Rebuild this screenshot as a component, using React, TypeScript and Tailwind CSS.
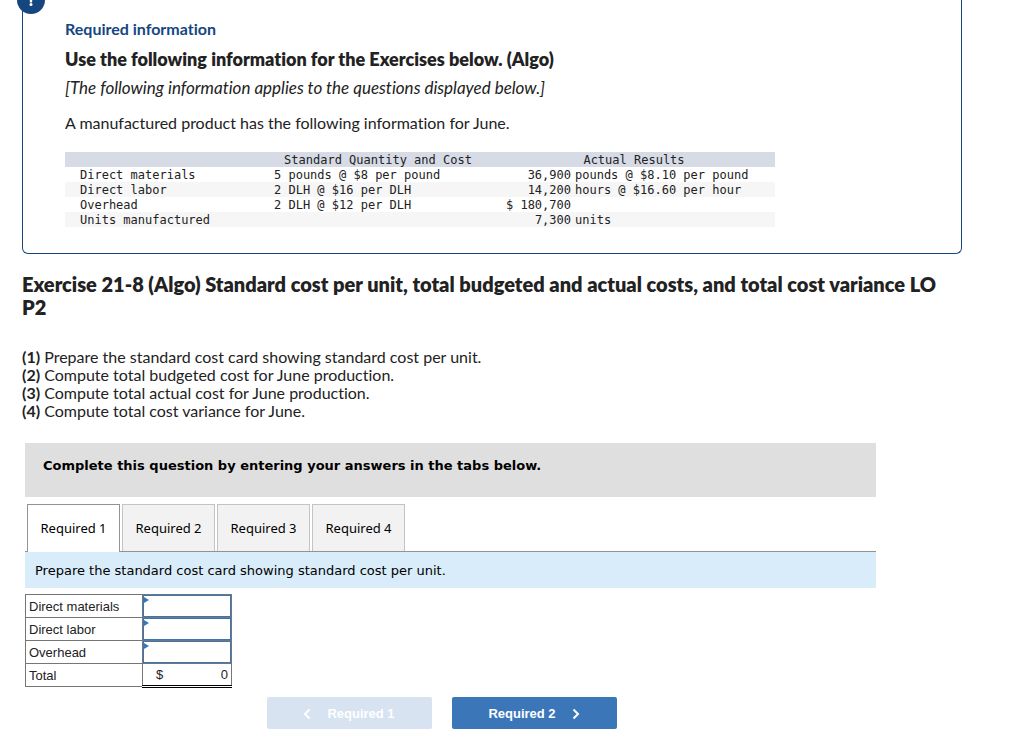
import * as React from 'react'
import { clsx } from 'clsx'

const facts = [
  { label: 'Direct materials', standard: '5 pounds @ $8 per pound', amount: '36,900', unit: 'pounds @ $8.10 per pound' },
  { label: 'Direct labor', standard: '2 DLH @ $16 per DLH', amount: '14,200', unit: 'hours @ $16.60 per hour' },
  { label: 'Overhead', standard: '2 DLH @ $12 per DLH', amount: '$ 180,700', unit: '' },
  { label: 'Units manufactured', standard: '', amount: '7,300', unit: 'units' },
]

const steps = [
  'Prepare the standard cost card showing standard cost per unit.',
  'Compute total budgeted cost for June production.',
  'Compute total actual cost for June production.',
  'Compute total cost variance for June.',
]

const tabs = ['Required 1', 'Required 2', 'Required 3', 'Required 4']

const costRows = ['Direct materials', 'Direct labor', 'Overhead']

function Chevron({ flip }: { flip?: boolean }) {
  return (
    <svg
      viewBox="0 0 8 12"
      fill="none"
      stroke="currentColor"
      strokeWidth="2"
      className={clsx('h-3 w-2', flip && 'rotate-180')}
      aria-hidden="true"
    >
      <path d="M1.5 1.5L6 6L1.5 10.5" />
    </svg>
  )
}

function InfoCard() {
  return (
    <section className="relative rounded-b-md border border-t-0 border-[#15467f] px-[42px] pt-[18px] pb-[26px]">
      <div className="absolute -top-[14px] -left-[6px] flex size-7 items-center justify-center rounded-full bg-[#15467f] text-white">
        <svg viewBox="0 0 28 28" className="size-7" fill="currentColor" aria-hidden="true">
          <path d="M12.4 7h3.2l-.5 9.500h-2.200z" />
          <circle cx="14" cy="18.500" r="1.500" />
        </svg>
      </div>

      <h2 className="text-base leading-[22px] font-bold text-[#15467f]">Required information</h2>
      <h3 className="mt-2 text-[18px] leading-[22px] font-extrabold">
        Use the following information for the Exercises below. (Algo)
      </h3>
      <p className="mt-[7px] text-[17px] leading-[22px] italic">
        [The following information applies to the questions displayed below.]
      </p>
      <p className="mt-[13px] text-base leading-[22px]">
        A manufactured product has the following information for June.
      </p>

      <table className="mt-[18px] w-full max-w-[710px] table-fixed font-['DejaVu_Sans_Mono',monospace] text-xs leading-[14px] [&_td]:pt-px [&_th]:pt-px">
        <colgroup>
          <col className="w-[198px]" />
          <col className="w-[230px]" />
          <col className="w-[80px]" />
          <col />
        </colgroup>
        <thead>
          <tr className="bg-[#d6dbe6]">
            <td />
            <th scope="col" className="font-normal">Standard Quantity and Cost</th>
            <th scope="col" colSpan={2} className="font-normal">Actual Results</th>
          </tr>
        </thead>
        <tbody>
          {facts.map((fact) => (
            <tr key={fact.label} className="even:bg-[#f6f6f6]">
              <th scope="row" className="pl-[15px] text-left font-normal">{fact.label}</th>
              <td className="pl-[11px]">{fact.standard}</td>
              <td className="pr-[2px] text-right whitespace-nowrap">{fact.amount}</td>
              <td className="pl-[2px] whitespace-nowrap">{fact.unit}</td>
            </tr>
          ))}
        </tbody>
      </table>
    </section>
  )
}

function CostCard() {
  return (
    <table className="mt-[6px] w-[207px] table-fixed border-collapse font-['Liberation_Sans',Arial,sans-serif] text-[13px] leading-5 text-[#222]">
      <colgroup>
        <col className="w-[117px]" />
        <col />
      </colgroup>
      <tbody>
        {costRows.map((row) => {
          const id = row.toLowerCase().replace(' ', '-')
          return (
            <tr key={row} className="h-[23px]">
              <th scope="row" className="border border-[#767676] p-0 pt-px pl-[3px] text-left font-normal">
                <label htmlFor={id}>{row}</label>
              </th>
              <td className="relative border border-[#767676] p-0">
                <input
                  id={id}
                  type="text"
                  className="block h-[22px] w-full border border-[#3b76b9] px-1 text-right outline-none"
                />
                <svg viewBox="0 0 5 6" className="absolute top-[2px] left-px h-[6px] w-[5px]" aria-hidden="true">
                  <path d="M0 0L5 3L0 6Z" fill="#3b76b9" />
                </svg>
              </td>
            </tr>
          )
        })}
        <tr className="h-[23px]">
          <th scope="row" className="border border-[#767676] p-0 pt-px pl-[3px] text-left font-normal">Total</th>
          <td className="border border-t-black border-r-[#767676] border-b-[3px] border-b-black p-0 [border-bottom-style:double]">
            <div className="flex justify-between pr-[3px] pl-[13px] leading-[19px]">
              <span>$</span>
              <span>0</span>
            </div>
          </td>
        </tr>
      </tbody>
    </table>
  )
}

export default function App() {
  const [active, setActive] = React.useState(0)

  return (
    <main className="pr-[51px] pb-3 pl-[22px] font-['Lato',sans-serif] text-[#222] [font-variant-ligatures:none]">
      <InfoCard />

      <h1 className="mt-[19px] pr-3 text-[20px] leading-[23px] font-extrabold">
        Exercise 21-8 (Algo) Standard cost per unit, total budgeted and actual costs, and total cost variance LO P2
      </h1>

      <div className="mt-[29px] text-base leading-[18px]">
        {steps.map((step, i) => (
          <p key={step}>
            <b className="font-bold">({i + 1})</b> {step}
          </p>
        ))}
      </div>

      <div className="mt-[23px] ml-[3px] max-w-[851px] font-['DejaVu_Sans',Verdana,sans-serif] text-[13px] text-black">
        <div className="bg-[#dfdfdf] px-[18px] pt-[13px] pb-[21px] leading-5 font-bold">
          Complete this question by entering your answers in the tabs below.
        </div>

        <div role="tablist" className="mt-[7px] flex items-start gap-[2px] border-b border-[#939393] pl-[2px]">
          {tabs.map((tab, i) => (
            <button
              key={tab}
              type="button"
              role="tab"
              aria-selected={i === active}
              onClick={() => setActive(i)}
              className={clsx(
                "w-[93px] border border-b-0 font-['Noto_Sans',sans-serif] text-[13px] leading-5",
                i === active ? '-mb-px h-12 border-[#939393] bg-white pb-px' : 'h-[47px] border-[#c3c3c3] bg-[#f2f2f2]',
              )}
            >
              {tab}
            </button>
          ))}
        </div>
        <div role="tabpanel">
          <p className="bg-[#d9ecfa] px-[10px] pt-[9px] pb-[7px] leading-5">{steps[active]}</p>
          <CostCard />
        </div>

        <div className="mt-[9px] flex justify-center gap-5 pr-[18px] font-['Liberation_Sans',Arial,sans-serif] font-bold text-white">
          <button
            type="button"
            disabled
            className="flex h-8 w-[165px] items-center justify-center gap-4 rounded-xs bg-[#d7e3f1] pt-px"
          >
            <Chevron flip />
            Required 1
          </button>
          <button
            type="button"
            className="flex h-8 w-[165px] items-center justify-center gap-4 rounded-xs bg-[#3b76b9] pt-px"
          >
            Required 2
            <Chevron />
          </button>
        </div>
      </div>
    </main>
  )
}
